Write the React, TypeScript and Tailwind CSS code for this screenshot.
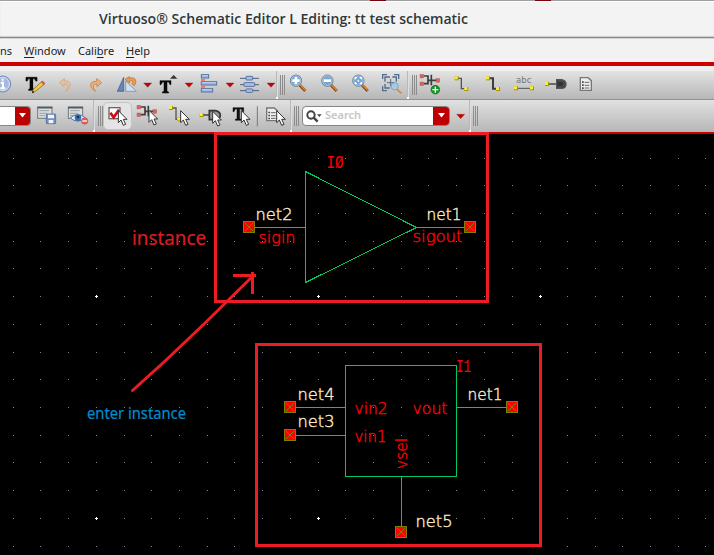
import type { ReactNode } from "react";

/* Toolbar artwork is drawn on a grid three times finer than the screen. */
function Icon({ x, w, tall, children }: { x: number; w: number; tall?: boolean; children?: ReactNode }) {
  return (
    <svg
      className="shrink-0"
      width={w / 3}
      height={tall ? 32 : 28}
      viewBox={tall ? `${x} 102 ${w} 96` : `${x} 15 ${w} 84`}
    >
      {children}
    </svg>
  );
}

const Handle = () => (
  <div className="flex h-5 shrink-0 gap-px">
    <i className="w-px bg-[#8c8c8c]" />
    <i className="w-px bg-[#8c8c8c]" />
    <i className="w-px bg-[#8c8c8c]" />
  </div>
);

const Divider = () => (
  <div className="flex w-[2px] shrink-0 flex-col self-stretch">
    <i className="flex-1 border-l border-[#b8b8b8] bg-[#dedede]" />
    <i className="h-[2px] bg-white" />
  </div>
);

const Down = ({ x, y = 57 }: { x: number; y?: number }) => (
  <path d={`M${x - 12} ${y - 6}h24l-12 13z`} fill="#c80000" stroke="#8d2020" strokeWidth="1" />
);

const Cursor = ({ x, y }: { x: number; y: number }) => (
  <path
    transform={`translate(${x} ${y})`}
    d="M0 0V36L8 28L15 44L22 41L15 26H26Z"
    fill="#fff"
    stroke="#333"
    strokeWidth="3"
  />
);

const Node = ({ x, y }: { x: number; y: number }) => (
  <g>
    <rect x={x - 6} y={y - 6} width="12" height="12" fill="#a89400" />
    <rect x={x - 6} y={y - 6} width="9" height="9" fill="#f8ed40" />
  </g>
);

const Lens = ({ x, y, children }: { x: number; y: number; children?: ReactNode }) => (
  <g>
    <path d={`M${x + 11} ${y + 13}l17 18`} stroke="#8f4a12" strokeWidth="9" />
    <path d={`M${x + 12} ${y + 12}l16 17`} stroke="#df9036" strokeWidth="4" />
    <circle cx={x} cy={y} r="17" fill="#7ba6d2" stroke="#71818f" strokeWidth="3" />
    <circle cx={x} cy={y} r="14.5" fill="none" stroke="#b9d3ec" strokeWidth="2" />
    {children}
  </g>
);

const InstanceGlyph = ({ x, y }: { x: number; y: number }) => (
  <g transform={`translate(${x} ${y})`}>
    <path d="M11 5H24V28H11M34 1V33M24 18H34M34 18H50" fill="none" stroke="#3d3d3d" strokeWidth="5" />
    <g fill="#e0625f" stroke="#9c4a4a" strokeWidth="1">
      <rect x="0" y="0" width="11" height="11" />
      <rect x="0" y="23" width="11" height="11" />
      <rect x="48" y="13" width="11" height="11" />
    </g>
  </g>
);

const WindowGlyph = ({ x }: { x: number }) => (
  <g>
    <rect x={x} y="123" width="43" height="34" fill="#d9dddd" stroke="#707a7b" strokeWidth="3" />
    <path d={`M${x - 1} 125h45`} stroke="#4f5b60" strokeWidth="5" />
    <path d={`M${x + 5} 134h29M${x + 5} 142h24M${x + 5} 149h17`} stroke="#9aa2a4" strokeWidth="3" />
  </g>
);

const DocGlyph = ({ x, y }: { x: number; y: number }) => (
  <g transform={`translate(${x} ${y})`}>
    <path d="M2 2H25L35 11V40H2Z" fill="#eee" stroke="#777" strokeWidth="4" />
    <path d="M7 13h5v5h-5zM7 22h5v5h-5zM7 31h5v5h-5z" fill="#444" />
    <path d="M15 16h14M15 25h14M15 33h14" stroke="#666" strokeWidth="3" />
  </g>
);

function TopTools() {
  return (
    <div className="flex h-[28px] shrink-0 items-center overflow-hidden bg-linear-to-b from-[#e3e3e3] to-[#b7b7b7]">
      <Icon x={0} w={45}>
        <circle cx="8" cy="54" r="24" fill="#a7b9df" stroke="#6f8ac0" strokeWidth="3" />
        <circle cx="8" cy="54" r="20" fill="none" stroke="#d9e3f5" strokeWidth="3" />
        <path d="M8 38v6M2 50h7v17M1 67h15" stroke="#fff" strokeWidth="6" fill="none" />
      </Icon>
      <Icon x={45} w={105}>
        <path d="M78 34h33v11h-3l-4-7h-5v30l5 2v3H86v-3l4-2V38h-5l-4 7h-3z" fill="#080808" />
        <path d="M78 34h33v11h-4l-4-7h-5v30l5 2v3H86v-3l4-2V38h-5l-3 7h-4z" fill="none" stroke="#080808" strokeWidth="2" />
        <path d="M126 46l8 8-28 22-9 4 3-10z" fill="#f1ce3e" stroke="#795521" strokeWidth="2" />
        <path d="M123 48l5-4 8 8-6 6z" fill="#df545e" />
        <path d="M96 82l2-8 5 5z" fill="#111" />
      </Icon>
      <Icon x={150} w={90}>
        <path d="M193 38L178 50L192 62V54C205 52 207 62 197 76C217 62 215 43 193 45Z" fill="#e6c19b" stroke="#ce9f73" strokeWidth="2" />
      </Icon>
      <Icon x={240} w={96}>
        <path d="M290 38L305 50L291 62V54C279 53 276 62 287 76C266 66 267 44 290 46Z" fill="#efb071" stroke="#bd7337" strokeWidth="2" />
      </Icon>
      <Icon x={336} w={84}>
        <path d="M371 34V76H352Z" fill="#6487b7" stroke="#365780" strokeWidth="2" />
        <path d="M377 45V76H409Z" fill="#d2def0" stroke="#6284b2" strokeWidth="2" />
        <path d="M375 40L388 32V37C407 30 413 48 402 59L396 53C402 46 396 42 389 45V51Z" fill="#ef9c50" stroke="#a96531" strokeWidth="2" />
      </Icon>
      <Icon x={420} w={45}><Down x={443} /></Icon>
      <Icon x={15} w={84}>
        <path d="M30 44h33v12h-3l-4-8h-5v28l5 2v3H37v-3l5-2V48h-4l-5 8h-3z" fill="#090909" stroke="#090909" strokeWidth="1.5" />
        <path d="M60 38l11-11 11 11z" fill="#333" />
      </Icon>
      <Icon x={99} w={39}><Down x={117} /></Icon>
      <Icon x={138} w={78}>
        <g fill="#9bb6e5" stroke="#5970a0" strokeWidth="3">
          <rect x="154" y="26" width="22" height="10" />
          <rect x="154" y="47" width="46" height="10" />
          <rect x="154" y="68" width="34" height="10" />
        </g>
        <path d="M156 29h18M156 50h42M156 71h30" stroke="#d4e0f7" strokeWidth="2" />
        <path d="M153 42h12M153 63h12" stroke="#f36352" strokeWidth="4" />
      </Icon>
      <Icon x={216} w={42}><Down x={240} /></Icon>
      <Icon x={258} w={81}>
        <path d="M270 37h57M270 56h57M270 74h57" stroke="#50617a" strokeWidth="3" />
        <g fill="#a9c1ea" stroke="#5970a0" strokeWidth="3">
          <rect x="288" y="31" width="20" height="11" rx="2" />
          <rect x="282" y="50" width="32" height="11" rx="2" />
          <rect x="288" y="69" width="20" height="10" rx="2" />
        </g>
      </Icon>
      <Icon x={339} w={39}><Down x={363} /></Icon>
      <Divider />
      <div className="w-[2px]" />
      <Handle />
      <Icon x={15} w={84}>
        <Lens x={48} y={44}><path d="M48 33v22M37 44h22" stroke="#fff" strokeWidth="8" /></Lens>
      </Icon>
      <Icon x={99} w={93}>
        <Lens x={142} y={44}><path d="M131 44h22" stroke="#fff" strokeWidth="8" /></Lens>
      </Icon>
      <Icon x={192} w={93}>
        <Lens x={235} y={44}>
          <path d="M226 40v-5h5M239 35h5v5M244 48v5h-5M231 53h-5v-5" stroke="#fff" strokeWidth="4" fill="none" />
          <circle cx="235" cy="44" r="3" fill="#e6f0fa" />
        </Lens>
      </Icon>
      <Icon x={285} w={96}>
        <path d="M308 39V26H321M342 26H356V39M308 61V74H321M315 47V33H330M337 33H349V47M315 54V66H329" fill="none" stroke="#526c8a" strokeWidth="4" />
        <path d="M332 39v22M321 50h22" stroke="#526c8a" strokeWidth="3" />
        <path d="M350 69l14 13" stroke="#d98534" strokeWidth="5" />
        <circle cx="344" cy="61" r="11" fill="#a6c9e7" stroke="#6991b5" strokeWidth="2" />
      </Icon>
      <Divider />
      <div className="w-[3px]" />
      <Handle />
      <Icon x={51} w={90}>
        <InstanceGlyph x={60} y={25} />
        <circle cx="106" cy="71" r="13" fill="#159526" stroke="#087114" strokeWidth="2" />
        <path d="M106 62v18M97 71h18" stroke="#fff" strokeWidth="4" />
      </Icon>
      <Icon x={141} w={93}>
        <path d="M170 37h14v31h15" fill="none" stroke="#555" strokeWidth="4" /><Node x={170} y={37} /><Node x={199} y={69} />
      </Icon>
      <Icon x={234} w={93}>
        <path d="M264 37h15v31h15" fill="none" stroke="#3d3d3d" strokeWidth="6" /><Node x={264} y={37} /><Node x={294} y={69} />
      </Icon>
      <Icon x={327} w={96}>
        <text x="348" y="50" fill="#777" fontFamily="DejaVu Sans, sans-serif" fontSize="26" textLength="46" lengthAdjust="spacingAndGlyphs">abc</text>
        <path d="M348 67h48" stroke="#555" strokeWidth="3" /><Node x={348} y={67} /><Node x={396} y={67} />
      </Icon>
      <Icon x={423} w={96}>
        <path d="M441 54h29" stroke="#383838" strokeWidth="4" />
        <path d="M470 41h15q13 3 13 13q0 13-13 13h-15z" fill="#333" stroke="#555" strokeWidth="4" />
        <path d="M474 45h10q9 3 9 9t-9 9h-10" fill="none" stroke="#888" strokeWidth="1.5" />
        <Node x={441} y={54} />
      </Icon>
      <Icon x={519} w={84}><DocGlyph x={539} y={33} /></Icon>
    </div>
  );
}

function LowerTools() {
  return (
    <div className="flex h-[32px] shrink-0 items-center overflow-hidden bg-linear-to-b from-[#e1e1e1] to-[#b7b7b7]">
      <div className="-mt-px flex h-5 w-[31px] shrink-0 overflow-hidden rounded-r-[4px] border border-l-0 border-[#888] bg-white">
        <div className="flex-1" />
        <div className="flex w-[15px] items-center justify-center bg-[#bd0000]">
          <svg width="7" height="5"><path d="M0 0h7L3.5 4.5z" fill="#fff" /></svg>
        </div>
      </div>
      <Icon x={93} w={90} tall>
        <WindowGlyph x={113} />
        <rect x="139" y="144" width="28" height="29" rx="2" fill="#748fc4" stroke="#435f97" strokeWidth="2" />
        <path d="M144 146h18v11h-18zM146 162h14v10h-14z" fill="#f1f4fb" />
      </Icon>
      <Icon x={183} w={96} tall>
        <WindowGlyph x={205} />
        <path d="M211 156Q233 136 257 156Q233 175 211 156Z" fill="#f2f5fa" stroke="#5576aa" strokeWidth="3" />
        <circle cx="234" cy="155" r="10" fill="#416fae" /><circle cx="234" cy="153" r="4" fill="#163154" />
        <circle cx="254" cy="165" r="10" fill="#e65959" stroke="#c13f3f" /><path d="M247 165h14" stroke="#fff" strokeWidth="4" />
      </Icon>
      <Divider />
      <div className="w-[3px] shrink-0" />
      <Handle />
      <div className="flex h-[28px] w-[29px] shrink-0 items-center overflow-hidden rounded-[5px] border border-[#c4c4c4] bg-[#e4e4e4]">
        <Icon x={312} w={81} tall>
          <rect x="327" y="125" width="33" height="33" fill="#fff" stroke="#666" strokeWidth="4" />
          <path d="M331 140l10 14 16-23" fill="none" stroke="#d50c18" strokeWidth="8" /><Cursor x={355} y={134} />
        </Icon>
      </div>
      <Icon x={396} w={93} tall><InstanceGlyph x={411} y={118} /><Cursor x={447} y={133} /></Icon>
      <Icon x={39} w={93} tall>
        <path d="M63 126h15v34h12" fill="none" stroke="#555" strokeWidth="4" /><Node x={63} y={126} /><Node x={88} y={160} /><Cursor x={92} y={134} />
      </Icon>
      <Icon x={132} w={96} tall>
        <path d="M155 147h23" stroke="#333" strokeWidth="4" />
        <path d="M178 134h18q15 3 15 14t-15 13h-18z" fill="#999" stroke="#333" strokeWidth="5" /><Node x={155} y={147} /><Cursor x={188} y={136} />
      </Icon>
      <Icon x={228} w={90} tall>
        <path d="M249 125h32v12h-3l-4-8h-5v29l5 2v3h-18v-3l5-2v-29h-5l-4 8h-3z" fill="#111" stroke="#111" strokeWidth="1.5" /><Cursor x={274} y={134} />
      </Icon>
      <Icon x={318} w={18} tall><path d="M322 121v60" stroke="#777" strokeWidth="3" /></Icon>
      <Icon x={336} w={84} tall><DocGlyph x={348} y={124} /><Cursor x={380} y={134} /></Icon>
      <Divider />
      <div className="w-[2px] shrink-0" />
      <Handle />
      <div className="-mt-px ml-[3px] flex h-5 w-[148px] shrink-0 items-center overflow-hidden rounded-[4px] border border-[#858585] bg-white">
        <Icon x={70} w={60} tall>
          <circle cx="94" cy="147" r="11" fill="none" stroke="#444" strokeWidth="6" /><path d="M102 155l12 12" stroke="#444" strokeWidth="7" />
          <path d="M112 145h14l-7 8z" fill="#444" />
        </Icon>
        <span className="ml-[2px] flex-1 font-['Noto_Sans',sans-serif] text-[11px] font-semibold text-[#c6c6c6]">Search</span>
        <div className="flex h-full w-[16px] items-center justify-center bg-[#bd0000]">
          <svg width="7" height="5"><path d="M0 0h7L3.5 4.5z" fill="#fff" /></svg>
        </div>
      </div>
      <Icon x={150} w={57} tall><Down x={182} y={151} /></Icon>
      <Divider />
      <div className="w-[2px] shrink-0" />
      <Handle />
    </div>
  );
}

const columns = [13, 40, 68, 96, 124, 151, 179, 207, 234, 262, 290, 318, 345, 373, 401, 428, 456, 484, 512, 540, 567, 595, 622, 650, 678, 705];
const rows = [158, 185, 213, 241, 268, 296, 324, 352, 379, 407, 435, 462, 490, 518, 546];

const Pin = ({ x, y }: { x: number; y: number }) => (
  <g>
    <rect x={x + 0.5} y={y + 0.5} width="11" height="11" fill="#f00" stroke="#808000" />
    <path d={`M${x + 2} ${y + 2}l8 8M${x + 10} ${y + 2}l-8 8`} stroke="#808000" />
  </g>
);

const Label = ({ x, y, w, red, mono, children }: { x: number; y: number; w: number; red?: boolean; mono?: boolean; children: string }) => (
  <text
    x={x}
    y={y}
    textLength={w}
    lengthAdjust="spacingAndGlyphs"
    fill={red ? "#ff0000" : "#ffe8c4"}
    stroke={red ? "#ff0000" : "#ffe8c4"}
    strokeWidth={mono ? 0 : 0.4}
    className={
      mono
        ? "font-['Liberation_Mono',monospace] text-[18px]"
        : "font-['DejaVu_Sans',sans-serif] text-[16px] font-extralight"
    }
  >
    {children}
  </text>
);

function Schematic() {
  return (
    <svg className="block shrink-0" width="714" height="421" viewBox="0 134 714 421">
      <g shapeRendering="crispEdges">
        {rows.map((y) =>
          columns.map((x) => <rect key={`${x}-${y}`} x={x} y={y} width="1" height="1" fill="#85859a" />),
        )}
        {[96, 318, 540].map((x) =>
          [296, 518].map((y) => <path key={`${x}-${y}`} d={`M${x - 1} ${y}h3v1h-3zM${x} ${y - 1}h1v3h-1z`} fill="#fff" />),
        )}
      </g>
      <g fill="none" stroke="#00c864" strokeWidth="1" shapeRendering="crispEdges">
        <path d="M305.5 171.5V282.5L416.5 227.5ZM255 227.5H305M416 227.5H464" />
        <path d="M345.5 365.5H456.5V476.5H345.5ZM296 407.5H345M296 435.5H345M457 407.5H506M401.5 477V526" />
      </g>
      <Pin x={243} y={221} /><Pin x={464} y={221} />
      <Pin x={284} y={401} /><Pin x={284} y={429} /><Pin x={506} y={401} /><Pin x={395} y={526} />
      <Label x={255.5} y={220} w={37}>net2</Label>
      <Label x={426.5} y={220} w={35}>net1</Label>
      <Label x={297.5} y={400} w={37}>net4</Label>
      <Label x={297.5} y={427} w={37}>net3</Label>
      <Label x={467.5} y={400} w={35}>net1</Label>
      <Label x={415.5} y={527} w={37}>net5</Label>
      <Label x={326.5} y={168} w={17} red mono>IØ</Label>
      <Label x={258.5} y={243} w={37} red>sigin</Label>
      <Label x={412.5} y={242} w={50} red>sigout</Label>
      <Label x={456} y={372} w={15} red mono>I1</Label>
      <Label x={354.5} y={414} w={33} red>vin2</Label>
      <Label x={354.5} y={442} w={32} red>vin1</Label>
      <Label x={412.5} y={414} w={35} red>vout</Label>
      <g transform="translate(407 469) rotate(-90)"><Label x={0} y={0} w={31} red>vsel</Label></g>
      <g fill="none" stroke="#ed1c24" strokeWidth="3">
        <path d="M215.5 133V301.5H487.5V133M214 133.5H489" />
        <rect x="256.5" y="344.5" width="284" height="201" />
        <path d="M132.5 390.5L164 362L203 325L254 275" strokeLinecap="round" />
        <path d="M233 275.5H256M252.5 272V294" />
      </g>
      <text x="132" y="245" textLength="74" lengthAdjust="spacingAndGlyphs" fill="#da1b22" stroke="#da1b22" strokeWidth="0.2" className="font-['Noto_Sans',sans-serif] text-[19px]">instance</text>
      <text x="87" y="419" textLength="99" lengthAdjust="spacingAndGlyphs" fill="#008bcc" stroke="#008bcc" strokeWidth="0.2" className="font-['Noto_Sans',sans-serif] text-[15.5px]">enter instance</text>
    </svg>
  );
}

export default function App() {
  return (
    <main className="flex h-[555px] w-[714px] flex-col overflow-hidden bg-black font-['Noto_Sans','Open_Sans',sans-serif]">
      <div className="flex h-px shrink-0 bg-[#a0a0a0]">
        <i className="ml-[370px] w-4 bg-[#780008]" /><i className="ml-[149px] w-4 bg-[#780008]" />
      </div>
      <header className="flex h-[37px] shrink-0 items-center border-t border-b border-t-white border-b-[#888] bg-[#f3f3f3] pl-[99px] shadow-[inset_0_-1px_1px_#ccc]">
        <svg width="380" height="30">
          <text x="0" y="19" textLength="369" lengthAdjust="spacingAndGlyphs" fill="#30373a" className="font-['Open_Sans',sans-serif] text-[14.5px] font-semibold">Virtuoso® Schematic Editor L Editing: tt test schematic</text>
        </svg>
      </header>
      <nav className="flex h-[24px] shrink-0 items-center border-t border-[#d4d4d4] bg-[#f2f2f2] pb-px text-[11px] leading-none text-[#222]">
        <span className="w-6">ns</span>
        <span className="w-[54px]"><u className="underline-offset-2">W</u>indow</span>
        <span className="w-12">Cali<u className="underline-offset-2">b</u>re</span>
        <span><u className="underline-offset-2">H</u>elp</span>
      </nav>
      <div className="h-1 shrink-0 bg-[#cc0000]" />
      <div className="h-[5px] shrink-0 bg-[#efefef]" />
      <TopTools />
      <div className="h-px shrink-0 bg-[#929292]" />
      <LowerTools />
      <div className="flex h-[2px] shrink-0 bg-[#cc0000]">
        <i className="ml-[214px] w-[275px] bg-[#ed1c24]" />
      </div>
      <Schematic />
    </main>
  );
}
